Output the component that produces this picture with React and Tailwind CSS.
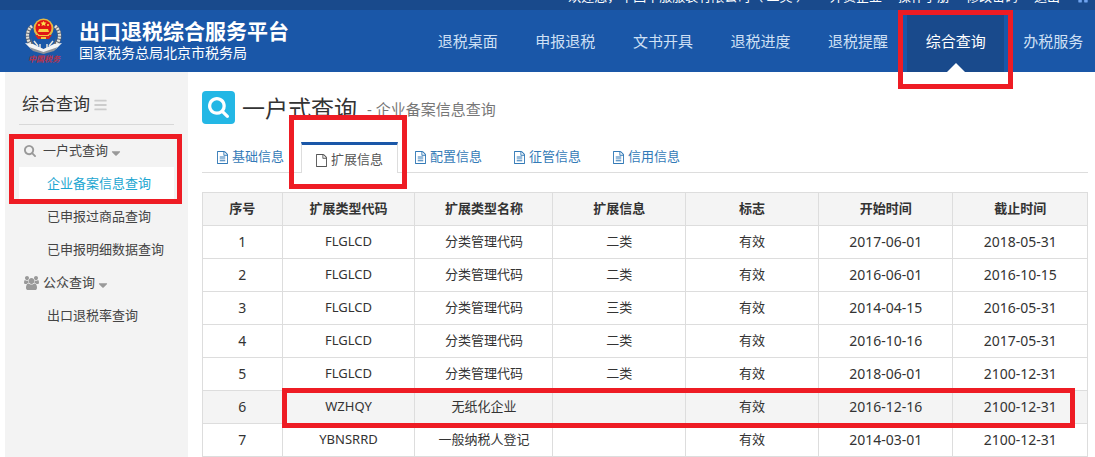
import React from 'react';
import { FaBars, FaCaretDown, FaHome } from 'react-icons/fa';

const navItems = ['退税桌面', '申报退税', '文书开具', '退税进度', '退税提醒', '综合查询', '办税服务'];
const topLinks = ['外贸企业', '操作手册', '修改密码', '退出'];
const tabs = ['基础信息', '扩展信息', '配置信息', '征管信息', '信用信息'];
const columns = ['序号', '扩展类型代码', '扩展类型名称', '扩展信息', '标志', '开始时间', '截止时间'];

const rows = [
    ['1', 'FLGLCD', '分类管理代码', '二类', '有效', '2017-06-01', '2018-05-31'],
    ['2', 'FLGLCD', '分类管理代码', '二类', '有效', '2016-06-01', '2016-10-15'],
    ['3', 'FLGLCD', '分类管理代码', '三类', '有效', '2014-04-15', '2016-05-31'],
    ['4', 'FLGLCD', '分类管理代码', '二类', '有效', '2016-10-16', '2017-05-31'],
    ['5', 'FLGLCD', '分类管理代码', '二类', '有效', '2018-06-01', '2100-12-31'],
    ['6', 'WZHQY', '无纸化企业', '', '有效', '2016-12-16', '2100-12-31'],
    ['7', 'YBNSRRD', '一般纳税人登记', '', '有效', '2014-03-01', '2100-12-31'],
];

const SearchIcon = ({ className }) => (
    <svg viewBox="0 128 1664 1664" fill="currentColor" className={className} aria-hidden="true">
        <path d="M1152 832q0-185-131.5-316.5T704 384 387.5 515.5 256 832t131.5 316.5T704 1280t316.5-131.5T1152 832zm512 832q0 52-38 90t-90 38q-54 0-90-38l-343-342q-179 124-399 124-143 0-273.5-55.5t-225-150-150-225T0 832t55.5-273.5 150-225 225-150T704 128t273.5 55.5 225 150 150 225T1408 832q0 220-124 399l343 343q37 37 37 90z" />
    </svg>
);

const UsersIcon = () => (
    <svg viewBox="0 0 1920 1792" fill="currentColor" className="h-[14px] w-[15px]" aria-hidden="true">
        <path d="M593 896q-162 5-265 128H194q-82 0-138-40.5T0 865q0-353 124-353 6 0 43.5 21t97.500 42.5T384 597q67 0 133-23-5 37-5 66 0 139 81 256zm1071 637q0 120-73 189.5t-194 69.5H523q-121 0-194-69.5T256 1533q0-53 3.500-103.500t14-109T300 1212t43-97.500 62-81 85.500-53.500T602 960q10 0 43 21.500t73 48 107 48 135 21.500 135-21.500 107-48 73-48 43-21.500q61 0 111.500 20t85.500 53.500 62 81 43 97.500 26.500 108.500 14 109 3.500 103.500zM640 256q0 106-75 181t-181 75-181-75-75-181 75-181T384 0t181 75 75 181zm704 384q0 159-112.500 271.500T960 1024 688.500 911.500 576 640t112.500-271.500T960 256t271.500 112.500T1344 640zm576 225q0 78-56 118.500t-138 40.500h-134q-103-123-265-128 81-117 81-256 0-29-5-66 66 23 133 23 59 0 119-21.500t97.500-42.500 43.500-21q124 0 124 353zm-128-609q0 106-75 181t-181 75-181-75-75-181 75-181 181-75 181 75 75 181z" />
    </svg>
);

const FileIcon = ({ lines }) => (
    <svg viewBox="0 0 1536 1792" fill="currentColor" className="h-[13px] w-[11px] shrink-0" aria-hidden="true">
        <path d="M1468 380q28 28 48 76t20 88v1152q0 40-28 68t-68 28H96q-40 0-68-28t-28-68V96q0-40 28-68T96 0h896q40 0 88 20t76 48zm-444-244v376h376q-10-29-22-41l-313-313q-12-12-41-22zm384 1528V640H992q-40 0-68-28t-28-68V128H128v1536h1280z" />
        {lines && <path d="M384 768h768v128H384zM384 1024h768v128H384zM384 1280h768v128H384z" />}
    </svg>
);

const Emblem = () => (
    <svg viewBox="0 0 38 46" className="h-[46px] w-[38px] shrink-0" aria-hidden="true">
        <path d="M7 8C1 13 1 22 7 28M30 8c6 5 6 14 0 20" fill="none" stroke="#5d6470" strokeWidth="4" />
        <path d="M7 8C1 13 1 22 7 28M30 8c6 5 6 14 0 20" fill="none" stroke="#e2e0da" strokeWidth="3" strokeDasharray="2 1" />
        <path d="M6 18c0 8 5 12 12.500 13C26 30 31 26 31 18v10l-12.500 7L6 28z" fill="#66666a" />
        <path d="M9 23l4 5M28 23l-4 5M15 26v4M22 26v4" stroke="#e8e4da" strokeWidth="1.500" />
        <path d="M0 25l8 1 10.500 5L29 26l8-1-6 6-12.500 4L6 31z" fill="#f4f4f4" />
        <path d="M4 29l14.500 5L33 29l-4 4-10.500 3L8 33z" fill="#8f939b" />
        <circle cx="18.500" cy="10.500" r="10" fill="#e5b843" />
        <circle cx="18.500" cy="10" r="8" fill="#e01515" />
        <path d="M18.500 3l1 1.500h2L20 6l.5 2-2-1-2 1 .5-2-1.500-1.500h2z" fill="#ffdf4d" />
        <circle cx="14" cy="7" r="1" fill="#ffdf4d" />
        <circle cx="23" cy="7" r="1" fill="#ffdf4d" />
        <path d="M13 14l1-3h9l1 3z" fill="#f8cf45" />
        <path d="M10 17h17l-3 4H13z" fill="#d8241f" />
        <path d="M13 17h11v1H13zM16 19h5v2h-5z" fill="#f4c63d" />
        <text x="3" y="44" fontSize="8" fontStyle="italic" fontWeight="700" fill="#b8324a">中国税务</text>
    </svg>
);

// red marker frame, sits over whatever it surrounds
const Marker = ({ className }) => (
    <span className={`pointer-events-none absolute z-10 border-5 border-[#ee1c24] ${className}`} />
);

const Header = () => (
    <header className="bg-[#1a57a8] text-white">
        <div className="flex h-[10px] items-end justify-end gap-4 overflow-hidden bg-[#194a8c] pr-[5px] pb-1.5 text-[13px] leading-[15px] whitespace-nowrap">
            <span className="mr-[5px]">欢迎您，中国中服服装有限公司（ 二类 ）</span>
            {topLinks.map((link) => (
                <a key={link} href="#">{link}</a>
            ))}
            <a href="#" aria-label="首页" className="text-[#6fa3ee]"><FaHome className="h-[14px] w-[14px]" /></a>
        </div>
        <div className="flex h-[62px]">
            <div className="flex w-[419px] shrink-0 items-center gap-4 pl-[25px]">
                <Emblem />
                <div className="whitespace-nowrap">
                    <h1 className="text-[21px] leading-6 font-bold">出口退税综合服务平台</h1>
                    <p className="text-sm leading-5">国家税务总局北京市税务局</p>
                </div>
            </div>
            <nav className="-mr-[7px] flex flex-1">
                {navItems.map((item) => {
                    const active = item === '综合查询';
                    return (
                        <a
                            key={item}
                            href="#"
                            className={`relative flex flex-1 items-center justify-center text-[15px] whitespace-nowrap ${active ? 'bg-[#194a8c] text-white' : 'text-[#cfe0f5]'}`}
                        >
                            {item}
                            {active && (
                                <>
                                    <svg viewBox="0 0 18 9" className="absolute bottom-0 h-[9px] w-[18px]" aria-hidden="true">
                                        <path d="M9 0l9 9H0z" fill="#fff" />
                                    </svg>
                                    <Marker className="-inset-x-[9px] top-0 -bottom-[17px]" />
                                </>
                            )}
                        </a>
                    );
                })}
            </nav>
        </div>
    </header>
);

const MenuGroup = ({ icon, title }) => (
    <button type="button" className="flex h-[33px] w-full items-center pl-[5px]">
        <span className="flex w-[19px] text-[#999]">{icon}</span>
        {title}
        <FaCaretDown className="mt-1 ml-[3px] h-[14px] w-[10px] text-[#999]" />
    </button>
);

const MenuItem = ({ title, active }) => (
    <a
        href="#"
        className={`flex h-[33px] items-center pl-7 ${active ? 'bg-white text-[#1ba6d1]' : ''}`}
    >
        {title}
    </a>
);

const Sidebar = () => (
    <aside className="ml-[5px] w-[183px] shrink-0 bg-[#f3f3f3] px-3.5 text-[13px] text-[#444]">
        <h2 className="mb-[9px] flex h-[53px] items-center gap-1 border-b border-[#d8d8d8] pt-3 pl-[3px] text-[17px] text-[#333]">
            综合查询
            <FaBars className="mt-0.5 h-[14px] w-[13px] text-[#ccc]" />
        </h2>
        <div className="relative">
            <MenuGroup icon={<SearchIcon className="h-[12px] w-[12px]" />} title="一户式查询" />
            <MenuItem title="企业备案信息查询" active />
            <Marker className="top-0 -right-2 -bottom-1 -left-[10px]" />
        </div>
        <MenuItem title="已申报过商品查询" />
        <MenuItem title="已申报明细数据查询" />
        <MenuGroup icon={<UsersIcon />} title="公众查询" />
        <MenuItem title="出口退税率查询" />
    </aside>
);

const RecordTable = () => (
    <table className="w-full table-fixed border-collapse border border-[#ddd] text-center text-[13px] text-[#333]">
        <colgroup>
            <col className="w-[9%]" />
            <col className="w-[15%]" />
            <col className="w-[15.6%]" />
            <col className="w-[15%]" />
            <col className="w-[15%]" />
            <col className="w-[15.2%]" />
            <col className="w-[15.2%]" />
        </colgroup>
        <thead>
            <tr className="h-[33px] bg-[#f4f4f4]">
                {columns.map((column) => (
                    <th key={column} className="border border-[#ddd] p-0 font-bold">{column}</th>
                ))}
            </tr>
        </thead>
        <tbody>
            {rows.map((row) => (
                <tr key={row[0]} className={`relative h-[33px] ${row[0] === '6' ? 'bg-[#f4f4f4]' : ''}`}>
                    {row.map((cell, i) => (
                        <td key={columns[i]} className={`border border-[#ddd] p-0 ${[0, 5, 6].includes(i) ? 'text-sm' : ''}`}>
                            {cell}
                            {row[0] === '6' && i === 1 && <Marker className="right-[13px] left-[9%] -top-[3px] -bottom-1" />}
                        </td>
                    ))}
                </tr>
            ))}
        </tbody>
    </table>
);

const App = () => {
    return (
        <div className="flex min-h-screen flex-col overflow-hidden bg-white font-['Noto_Sans','Noto_Sans_CJK_SC',sans-serif]">
            <Header />
            <div className="flex flex-1">
                <Sidebar />
                <main className="min-w-0 flex-1 pt-[19px] pr-[7px] pl-3.5">
                    <div className="flex h-[33px] items-center">
                        <span className="flex h-[33px] w-[33px] items-center justify-center rounded bg-[#23b7e5] text-white">
                            <SearchIcon className="h-[21px] w-[21px]" />
                        </span>
                        <h2 className="ml-[7px] text-[23px] leading-8 text-[#333]">一户式查询</h2>
                        <p className="mt-1 ml-2.5 text-[15px] text-[#777]">- 企业备案信息查询</p>
                    </div>

                    <div role="tablist" className="mt-[18px] flex gap-0.5 border-b border-[#ddd] text-[13px] text-[#337ab7]">
                        {tabs.map((tab) => {
                            const active = tab === '扩展信息';
                            return (
                                <button
                                    key={tab}
                                    type="button"
                                    role="tab"
                                    aria-selected={active}
                                    className={`relative flex w-[97px] items-center justify-center gap-1 ${active ? '-mb-px h-[31px] border-x border-t-3 border-x-[#ddd] border-t-[#1a57a8] bg-white pt-0.5 text-[#555]' : 'h-[30px]'}`}
                                >
                                    <FileIcon lines={!active} />
                                    {tab}
                                    {active && <Marker className="-top-[30px] -right-[10px] -bottom-4 -left-[13px]" />}
                                </button>
                            );
                        })}
                    </div>

                    <div className="mt-[19px]">
                        <RecordTable />
                    </div>
                </main>
            </div>
        </div>
    );
};

export default App;
